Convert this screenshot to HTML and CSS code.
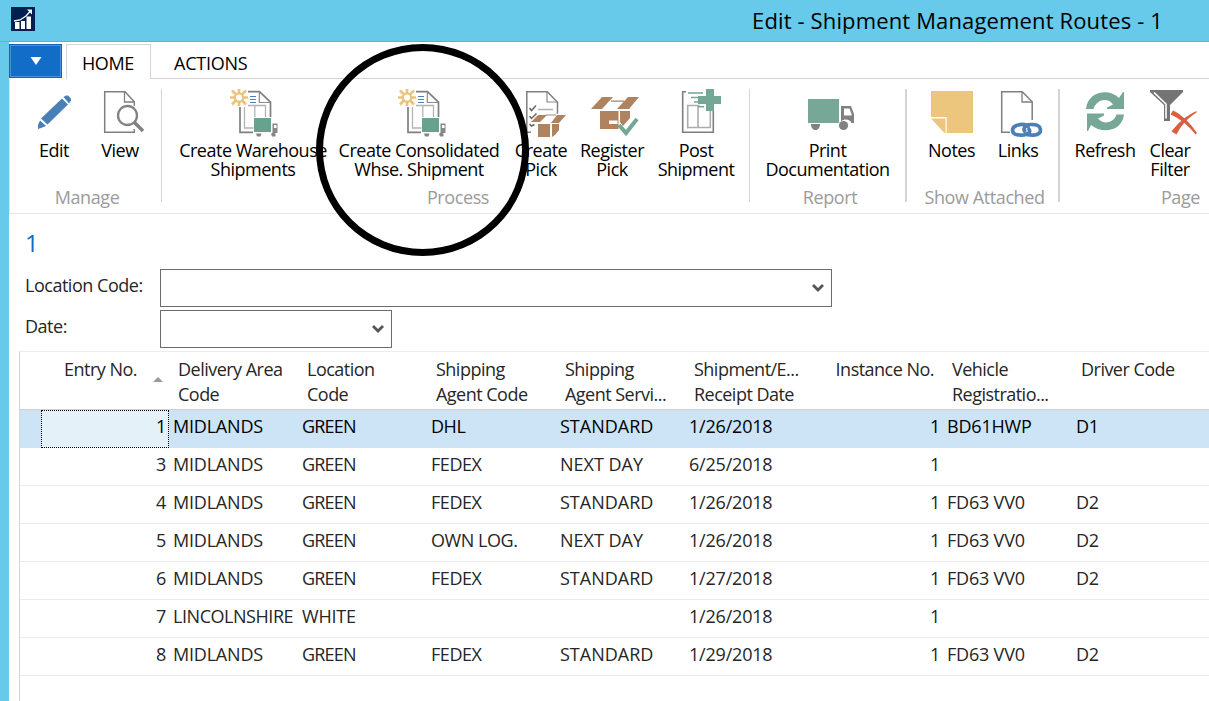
FILE: index.html
```html
<!DOCTYPE html>
<html lang="en">
<head>
<meta charset="utf-8">
<title>Edit - Shipment Management Routes - 1</title>
<link rel="stylesheet" href="styles.css">
</head>
<body>
<header class="titlebar">
  <svg class="app-icon" width="24" height="24" viewBox="0 0 24 24">
    <rect width="24" height="24" fill="#00204f"/>
    <path d="M4 15h4.500v7H4zM10 14h4v8h-4zM15.500 9.500h4.500v12.500h-4.500z" fill="#fff"/>
    <path d="M3 14l6-1 6-4 4.500-5" fill="none" stroke="#fff" stroke-width="1.300"/>
    <path d="M16 2.500h5v5z" fill="#fff"/>
  </svg>
  <h1 class="title">Edit - Shipment Management Routes - 1</h1>
</header>

<main class="window">
  <nav class="tabs">
    <button class="file-menu"><svg width="12" height="8" viewBox="0 0 12 8"><path d="M0.500 0h11L6 8z" fill="#fff"/></svg></button>
    <a class="tab active">HOME</a>
    <a class="tab plain">ACTIONS</a>
  </nav>

  <section class="ribbon">
    <div class="group manage">
      <div class="buttons">
        <div class="btn w66">
          <svg class="icon" viewBox="30 89 48 48"><g fill="#4a7fb8"><path d="M62 98.500l6 6-20.500 20-6.500-6z"/><path d="M63.500 97l2.500-1.500h2l3 3v2l-2 3z"/><path d="M40 120.500l6 5.500-5 2-3 1v-4z"/></g></svg>
          <span>Edit</span>
        </div>
        <div class="btn w66">
          <svg class="icon" viewBox="96 89 48 48"><path d="M134.300 129v3.300h-29.600V91.700H125l9.300 10v4" fill="none" stroke="#7f7f7f" stroke-width="1.500"/><path d="M124.500 91.500v10.500h10" fill="none" stroke="#7f7f7f" stroke-width="1.300"/><circle cx="127.500" cy="115.500" r="9.500" fill="#fff" stroke="#828282" stroke-width="2.300"/><path d="M134.500 122.500l8.500 8.500" stroke="#828282" stroke-width="3.600"/></svg>
          <span>View</span>
        </div>
      </div>
      <div class="caption">Manage</div>
    </div>

    <div class="group process">
      <div class="buttons">
        <div class="btn w166">
          <svg class="icon nudge-s" viewBox="230 89 48 48"><g id="new-shipment"><path d="M248 91.700h11.500l11 10.500V117M240 107v25.300h13" fill="none" stroke="#7f7f7f" stroke-width="1.700"/><path d="M259.300 92v10.500h11" fill="none" stroke="#8a8a8a" stroke-width="1.200"/><path d="M244.500 107v21h9M248 105.500h17.500V117M254.800 106v11" fill="none" stroke="#b3b3b3" stroke-width="1.300"/><path d="M250 96.500h6M250 99.500h6M250 102.500h6" stroke="#4a7fb8" stroke-width="1.200"/><g stroke="#ecc37c" stroke-width="2.700" fill="none"><circle cx="239" cy="97.500" r="4.200" stroke-width="2.200"/><path d="M239 89v4M239 102v4M230 97.500h4.500M243.500 97.500h4.500M232 90.500l3.500 3.500M246 90.500l-3.500 3.500M232 104.500l3.500-3.500M246 104.500l-3.500-3.500"/></g><path d="M254 118h17v14h-17z" fill="#66a28e"/><path d="M272.500 123.500h5v9.500h-5zM274 125v3h2.500v-3z" fill="#888" fill-rule="evenodd"/><path d="M256 133.500h5.500l-1 3h-3.500zM271 134l2-1.500 2.500 1v3h-3.500z" fill="#858585"/></g></svg>
          <span>Create Warehouse<br>Shipments</span>
        </div>
        <div class="btn w166">
          <svg class="icon nudge-m" viewBox="230 89 48 48"><use href="#new-shipment"/></svg>
          <span>Create Consolidated<br>Whse. Shipment</span>
        </div>
        <div class="btn w78">
          <svg class="icon" viewBox="518 89 48 48"><path d="M532 132.300h-4.200V91.700h20.500l10.200 10.500v11.500" fill="none" stroke="#7f7f7f" stroke-width="1.500"/><path d="M548 92v10h10" fill="none" stroke="#8a8a8a" stroke-width="1.200"/><path d="M530.500 108l2 2.500 4.500-5M530.500 116l2 2.500 5-5M530.500 124l2 2 3-1.500" fill="none" stroke="#666" stroke-width="1.500"/><path d="M539 109.500h15" stroke="#b0b0b0" stroke-width="1.500"/><g fill="#b08360"><path d="M539 115h9l-7 7h-9zM558 115h9l-7 8h-8zM539 124h12v13h-12zM553 124h7v6l-4 5-3 2z"/><path d="M547 114.500h10v1h-10z"/></g></svg>
          <span>Create<br>Pick</span>
        </div>
        <div class="btn w64">
          <svg class="icon nudge-m" viewBox="590 89 48 48"><g fill="#b08360"><path d="M601 97h11l-11 12h-11zM627 97h11l-10 12h-12zM610 100.500h13v1.200h-13zM599 111h18.500v18H599zM619 111h10v7l-7 8-3-4z"/></g><path d="M608 120.500h8.500v3.500H608z" fill="#fff"/><path d="M618 125l7 8 11-14" fill="none" stroke="#74a795" stroke-width="4"/></svg>
          <span>Register<br>Pick</span>
        </div>
        <div class="btn w104">
          <svg class="icon" viewBox="672 89 48 48"><path d="M686 91.800h-3.300v40.500h30.600V111" fill="none" stroke="#7f7f7f" stroke-width="1.600"/><path d="M687.700 128.500v-23h12M698 106v22M687.700 127.500h22.600V111" fill="none" stroke="#adadad" stroke-width="1.600"/><path d="M688 93h15M691 97.500h8M694 102h8M698 106.800h6" stroke="#74a795" stroke-width="1.400"/><path d="M706 89h8v7h7v8h-7v7h-8v-7h-8v-8h8z" fill="#74a795"/></svg>
          <span>Post<br>Shipment</span>
        </div>
      </div>
      <div class="caption">Process</div>
    </div>

    <div class="group report">
      <div class="buttons">
        <div class="btn w155">
          <svg class="icon nudge-m" viewBox="806 89 48 48"><path d="M808 99h31v24h-31z" fill="#76a797"/><path d="M841 106h10l3 8v9h-2.500c-1-3.500-7-5-10.500-1.500zM844 108.500v7h7.500v-1.500l-2-5.500z" fill="#818181" fill-rule="evenodd"/><path d="M811 124h9c0 8-9 8-9 0z" fill="#818181"/><circle cx="843.500" cy="125.500" r="4.600" fill="#818181"/></svg>
          <span>Print<br>Documentation</span>
        </div>
      </div>
      <div class="caption">Report</div>
    </div>

    <div class="group attached">
      <div class="buttons">
        <div class="btn w67">
          <svg class="icon" viewBox="928 89 48 48"><path d="M931 91h42v42h-26.300v-16H931zM931 118.500h14.500v14.500h-1z" fill="#edc67e"/></svg>
          <span>Notes</span>
        </div>
        <div class="btn w66">
          <svg class="icon" viewBox="994 89 48 48"><path d="M1010 132.300h-8.300V91.700h20.500l10 10V120" fill="none" stroke="#7f7f7f" stroke-width="1.500"/><path d="M1022 92v10h10" fill="none" stroke="#7f7f7f" stroke-width="1.300"/><g fill="none" stroke="#4a7fb8" stroke-width="3.700"><path d="M1025 133c3 2.500 6 2.500 10 2 6-1 6.500-5 4.500-8s-6-2.500-9-2.500c-6 0-8 5-5 7.500"/><path d="M1029 127c-3-3-7-3.200-11-2-6 1-6.500 6-4 8.500 2 2 6 1.500 10 1.500 6-1 7-4 4-7"/></g></svg>
          <span>Links</span>
        </div>
      </div>
      <div class="caption">Show Attached</div>
    </div>

    <div class="group page">
      <div class="buttons">
        <div class="btn w66">
          <svg class="icon" viewBox="1082 89 48 48"><g fill="#76a797"><path d="M1087 109c2-18 23-21 33-11l4-6h1v17h-17v-1.500l6-3c-5-8-17-5-19.500 4.500z"/><path d="M1125 114.500c-2 17-22 20-33 10.500l-3 6h-1v-17.500h17v2l-6 3c6 7 16 4 18.500-4z"/></g></svg>
          <span>Refresh</span>
        </div>
        <div class="btn w64">
          <svg class="icon nudge-m" viewBox="1149 89 48 48"><path d="M1150 90h33v2l-13 13v16h-6v-16l-14-13z" fill="#747474"/><path d="M1154 92.500l12 11.500v14.500" fill="none" stroke="#fff" stroke-width="1.600"/><path d="M1173 110.500c8 3.500 17 12 24 22.500l-1.500 1.500c-7-9-15-15.500-25-20z" fill="#d9603f"/><path d="M1196.500 112.500c-8 5-15 12-20 22l-5-3c6-8 14-15.500 25-20.500z" fill="#d9603f"/></svg>
          <span>Clear<br>Filter</span>
        </div>
      </div>
      <div class="caption">Page</div>
    </div>
  </section>

  <section class="content">
    <h2 class="heading">1</h2>
    <div class="field"><label>Location Code:</label><div class="combo wide"><svg class="chev" viewBox="0 0 12 9"><path d="M1 1l5 5 5-5" /></svg></div></div>
    <div class="field"><label>Date:</label><div class="combo narrow"><svg class="chev" viewBox="0 0 12 9"><path d="M1 1l5 5 5-5" /></svg></div></div>

    <div class="grid">
      <div class="row head">
        <div class="num sorted">Entry No.<svg class="sort" viewBox="0 0 10 5"><path d="M0 5l5-5 5 5z"/></svg></div>
        <div>Delivery Area<br>Code</div><div>Location<br>Code</div><div>Shipping<br>Agent Code</div><div>Shipping<br>Agent Servi...</div><div>Shipment/E...<br>Receipt Date</div><div class="num">Instance No.</div><div>Vehicle<br>Registratio...</div><div>Driver Code</div>
      </div>
      <div class="row selected"><div class="num focus">1</div><div>MIDLANDS</div><div class="loc">GREEN</div><div class="agent">DHL</div><div class="service">STANDARD</div><div>1/26/2018</div><div class="num">1</div><div>BD61HWP</div><div>D1</div></div>
      <div class="row"><div class="num">3</div><div>MIDLANDS</div><div class="loc">GREEN</div><div class="agent">FEDEX</div><div class="service">NEXT DAY</div><div>6/25/2018</div><div class="num">1</div><div></div><div></div></div>
      <div class="row"><div class="num">4</div><div>MIDLANDS</div><div class="loc">GREEN</div><div class="agent">FEDEX</div><div class="service">STANDARD</div><div>1/26/2018</div><div class="num">1</div><div>FD63 VV0</div><div>D2</div></div>
      <div class="row"><div class="num">5</div><div>MIDLANDS</div><div class="loc">GREEN</div><div class="agent">OWN LOG.</div><div class="service">NEXT DAY</div><div>1/26/2018</div><div class="num">1</div><div>FD63 VV0</div><div>D2</div></div>
      <div class="row"><div class="num">6</div><div>MIDLANDS</div><div class="loc">GREEN</div><div class="agent">FEDEX</div><div class="service">STANDARD</div><div>1/27/2018</div><div class="num">1</div><div>FD63 VV0</div><div>D2</div></div>
      <div class="row"><div class="num">7</div><div class="tight">LINCOLNSHIRE</div><div>WHITE</div><div></div><div></div><div>1/26/2018</div><div class="num">1</div><div></div><div></div></div>
      <div class="row"><div class="num">8</div><div>MIDLANDS</div><div class="loc">GREEN</div><div class="agent">FEDEX</div><div class="service">STANDARD</div><div>1/29/2018</div><div class="num">1</div><div>FD63 VV0</div><div>D2</div></div>
    </div>
  </section>
</main>
<div class="highlight-ring"></div>
</body>
</html>
```
FILE: styles.css
```css
* { box-sizing: border-box; }
body {
  margin: 0;
  width: 1209px;
  height: 701px;
  overflow: hidden;
  background: #67caea;
  font: 400 18px/19px "Open Sans", "Noto Sans", sans-serif;
  color: #000;
}
.titlebar {
  height: 42px;
  padding: 0 46px 0 11px;
  display: flex;
  align-items: flex-start;
  justify-content: space-between;
  border-bottom: 1px solid #7fa5b8;
}
.app-icon { margin-top: 7px; }
.title { margin: 5px 0 0; font-size: 22px; line-height: 30px; font-weight: 400; letter-spacing: 0.14px; white-space: nowrap; }
.window { margin-left: 9px; height: 659px; background: #fff; overflow: hidden; }

.tabs { height: 37px; display: flex; align-items: flex-end; }
.tabs::after { content: ""; flex: 1; border-bottom: 1px solid #d4d4d4; }
.file-menu {
  width: 53px; height: 34px; margin-bottom: 1px; padding: 0;
  display: flex; align-items: center; justify-content: center;
  background: #116dc8; border: 1px solid #1165b8; box-shadow: inset 0 0 0 1px #4c91da;
}
.tab { height: 35px; }
.tab.active { width: 85px; margin-left: 4px; padding: 9px 0 0 15px; border: 1px solid #d4d4d4; border-bottom: 0; letter-spacing: -0.4px; }
.tab.plain { padding: 10px 0 0 23px; border-bottom: 1px solid #d4d4d4; letter-spacing: -0.25px; }

.ribbon { height: 135px; display: flex; border-left: 1px solid #e2e2e2; border-bottom: 1px solid #e5e5e5; overflow: hidden; }
.group { flex: none; height: 113px; margin-top: 10px; border-right: 1px solid #d4d4d4; display: flex; flex-direction: column; justify-content: space-between; }
.manage { width: 152px; padding-left: 11px; }
.process { width: 588px; padding-left: 8px; }
.report { width: 157px; border-right-width: 2px; }
.attached { width: 153px; padding-left: 11px; border-right-width: 2px; }
.page { width: 240px; padding-left: 12px; border-right: 0; }
.buttons { display: flex; align-items: flex-start; }
.btn { flex: none; display: flex; flex-direction: column; align-items: center; text-align: center; letter-spacing: -0.5px; white-space: nowrap; }
.btn span { margin-top: 4px; }
.icon { width: 48px; height: 48px; overflow: visible; }
.nudge-s { margin-left: 2px; }
.nudge-m { margin-left: 5px; }
.w64 { width: 64px; }
.w66 { width: 66px; }
.w67 { width: 67px; }
.w78 { width: 78px; }
.w104 { width: 104px; }
.w155 { width: 155px; }
.w166 { width: 166px; }
.caption { color: #9b9b9b; text-align: center; line-height: 10px; letter-spacing: -0.4px; }
.manage .caption { padding-right: 8px; }
.process .caption { padding-right: 3px; }
.report .caption { padding-left: 5px; }
.attached .caption { padding-right: 7px; }
.page .caption { padding-right: 11px; }

.content { padding-left: 10px; color: #262626; }
.heading { margin: 14px 0 11px 6px; font-size: 24px; line-height: 30px; font-weight: 400; color: #1169c8; }
.field { height: 38px; margin-bottom: 3px; display: flex; align-items: center; letter-spacing: -0.48px; }
.field label { width: 141px; padding: 0 0 6px 6px; }
.combo { height: 38px; border: 1px solid #6c6c6c; display: flex; align-items: center; justify-content: flex-end; padding-right: 7px; }
.wide { width: 672px; }
.narrow { width: 232px; }
.chev { width: 12px; height: 9px; fill: none; stroke: #555; stroke-width: 2.8; }

.grid { height: 360px; border-top: 1px solid #ececec; border-left: 1px solid #d4d4d4; }
.row { display: grid; grid-template-columns: 149px repeat(8, 129px); height: 38px; line-height: 33px; border-bottom: 1px solid #ebebeb; letter-spacing: -0.2px; }
.row > div { padding-left: 4px; white-space: nowrap; }
.row > .num { text-align: right; padding: 0 3px 0 0; }
.row > .loc { letter-spacing: -0.8px; }
.row > .agent, .row > .tight { letter-spacing: -0.45px; }
.row > .service { letter-spacing: 0; }
.row.head { height: 58px; padding-top: 5px; line-height: 25px; border-bottom-color: #d0d2d4; letter-spacing: -0.52px; }
.row.head > div { padding-left: 9px; }
.row.head > .num { padding: 0 9px 0 0; }
.row.head > .sorted { padding-right: 6px; display: flex; justify-content: flex-end; gap: 16px; }
.sort { width: 10px; height: 5px; margin-top: 20px; fill: #9c9c9c; }
.row.selected { background: #cde4f7; border-bottom-color: #cde4f7; color: #000; }
.row > .focus { margin-left: 21px; height: 38px; background: #e5f1f9; border: 1px dotted #000; padding-right: 2px; line-height: 31px; }

.highlight-ring { position: absolute; left: 316px; top: 44px; width: 213px; height: 212px; border: 7px solid #000; border-radius: 50%; }
```
